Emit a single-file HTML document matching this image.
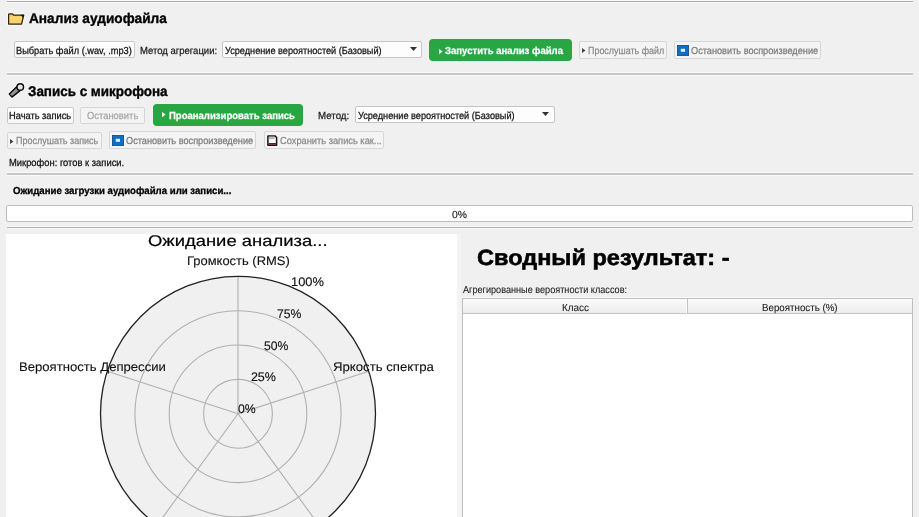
<!DOCTYPE html>
<html><head><meta charset="utf-8">
<style>
html,body{margin:0;padding:0;}
body{width:919px;height:517px;overflow:hidden;background:#f0f0f0;position:relative;font-family:"Liberation Sans",sans-serif;color:#000;}
.a{position:absolute;}
.t{position:absolute;white-space:nowrap;line-height:1;transform-origin:0 0;text-rendering:geometricPrecision;}
.sep{position:absolute;left:7px;width:906px;height:2px;background:#c6c6c6;box-shadow:0 1px 0 #fafafa,0 -1px 0 #fafafa;}
.btn{position:absolute;box-sizing:border-box;border:1px solid #c9c9c9;border-radius:2px;background:linear-gradient(#ffffff,#f7f7f7);}
.btn.dis{border-color:#d6d6d6;background:#f4f4f4;}
.green{position:absolute;box-sizing:border-box;background:#27a643;border-radius:4px;}
.combo{position:absolute;box-sizing:border-box;border:1px solid #c6c6c6;border-radius:2px;background:#fdfdfd;}
.ui{font-size:10px;}
.gray{color:#6e6e6e;}
.lgray{color:#9c9c9c;}
.wb{color:#fff;font-weight:bold;font-size:10px;}
.h{font-weight:bold;font-size:14px;}
</style></head><body><div id="wrap" style="position:absolute;left:0;top:0;width:919px;height:517px;overflow:hidden;background:#f0f0f0;filter:blur(0.3px)">

<!-- separators -->
<div class="a" style="left:7px;top:1px;width:906px;height:1px;background:#a9a9a9;box-shadow:0 1px 0 #fbfbfb,0 -1px 0 #fbfbfb;"></div>
<div class="sep" style="top:73px;"></div>
<div class="sep" style="top:173px;"></div>
<div class="a" style="left:7px;top:227px;width:906px;height:1px;background:#b0b0b0;box-shadow:0 1px 0 #f8f8f8,0 -1px 0 #f8f8f8;"></div>

<!-- Section 1 header -->
<svg class="a" style="left:5px;top:10px" width="22" height="18" viewBox="0 -0.4 22 18">
  <path d="M3.6 4.2 Q3.6 3.4 4.5 3.4 L7.5 3.4 L8.5 4.6 L18.8 4.6 L16.6 13.6 L3.6 13.6 Z" fill="none" stroke="#fff" stroke-width="3" stroke-linejoin="round"/>
  <defs><linearGradient id="fg" x1="0" y1="0" x2="0" y2="1"><stop offset="0" stop-color="#f3b84a"/><stop offset="0.35" stop-color="#fbd673"/><stop offset="1" stop-color="#f7cf6a"/></linearGradient></defs>
  <path d="M3.6 4.2 Q3.6 3.4 4.5 3.4 L7.5 3.4 L8.5 4.6 L18.8 4.6 L16.6 13.6 L3.6 13.6 Z" fill="url(#fg)" stroke="#2e2208" stroke-width="1.25" stroke-linejoin="round"/>
  <path d="M15.4 4.4 L19.2 4.4 L17.9 7.2 Z" fill="#111"/>
</svg>

<div class="btn" style="left:14px;top:41px;width:121px;height:17px;"></div>
<div class="combo" style="left:222px;top:41px;width:200px;height:17px;"></div>
<svg class="a" style="left:410px;top:47px" width="7" height="4"><path d="M0 0 L7 0 L3.5 4Z" fill="#333"/></svg>

<div class="green" style="left:429px;top:39px;width:143px;height:22px;"></div>
<svg class="a" style="left:438.5px;top:48.5px" width="4" height="6"><path d="M0 0 L3.6 2.6 L0 5.2Z" fill="#fff"/></svg>

<div class="btn dis" style="left:579px;top:41px;width:88px;height:18px;"></div>
<svg class="a" style="left:582px;top:48px" width="4" height="5"><path d="M0 0 L3.5 2.5 L0 5Z" fill="#444"/></svg>

<div class="btn dis" style="left:674px;top:41px;width:147px;height:18px;"></div>
<svg class="a" style="left:677px;top:45px" width="12" height="11" viewBox="0 0 12 11"><rect x="0.5" y="0.3" width="11" height="10.4" fill="#0d6ec4" stroke="#0b3f80" stroke-width="0.8"/><rect x="3.8" y="3.8" width="4.2" height="3" fill="#d9f3ff"/></svg>

<!-- Section 2 header -->
<svg class="a" style="left:5px;top:80px" width="22" height="20" viewBox="0 0 22 20">
  <g fill="none" stroke="#fff" stroke-width="3.2" stroke-linejoin="round">
   <circle cx="15.25" cy="7" r="3.4"/>
   <path d="M11.66 6.73 L15.12 10.61 L6.93 17.09 L4.27 14.11 Z"/>
  </g>
  <defs><linearGradient id="mg" x1="0" y1="0" x2="1" y2="1"><stop offset="0" stop-color="#333"/><stop offset="0.5" stop-color="#9a9a9a"/><stop offset="1" stop-color="#2a2a2a"/></linearGradient></defs>
  <path d="M11.66 6.73 L15.12 10.61 L6.93 17.09 L4.27 14.11 Z" fill="url(#mg)" stroke="#0c0c0c" stroke-width="1.4" stroke-linejoin="round"/>
  <circle cx="15.25" cy="7" r="3.3" fill="#e6e6e6" stroke="#0c0c0c" stroke-width="1.5"/>
</svg>

<div class="btn" style="left:7px;top:107px;width:67px;height:17px;"></div>
<div class="btn dis" style="left:80px;top:107px;width:65px;height:17px;"></div>

<div class="green" style="left:153px;top:104px;width:150px;height:22px;"></div>
<svg class="a" style="left:162.3px;top:112px" width="4" height="6"><path d="M0 0 L3.7 2.6 L0 5.2Z" fill="#fff"/></svg>

<div class="combo" style="left:355px;top:106px;width:200px;height:17px;"></div>
<svg class="a" style="left:542px;top:112px" width="7" height="4"><path d="M0 0 L7 0 L3.5 4Z" fill="#333"/></svg>

<div class="btn dis" style="left:7px;top:132px;width:95px;height:17px;"></div>
<svg class="a" style="left:10px;top:139px" width="4" height="5"><path d="M0 0 L3.5 2.5 L0 5Z" fill="#444"/></svg>

<div class="btn dis" style="left:109px;top:131px;width:147px;height:18px;"></div>
<svg class="a" style="left:112px;top:135px" width="12" height="11" viewBox="0 0 12 11"><rect x="0.5" y="0.3" width="11" height="10.4" fill="#0d6ec4" stroke="#0b3f80" stroke-width="0.8"/><rect x="3.8" y="3.8" width="4.2" height="3" fill="#d9f3ff"/></svg>

<div class="btn dis" style="left:264px;top:131px;width:120px;height:18px;"></div>
<svg class="a" style="left:266px;top:134px" width="13" height="13" viewBox="0 0 13 13"><path d="M1.9 1.9 L9 1.9 L10.6 3.5 L10.6 11.3 L1.9 11.3Z" fill="#fdfdfd" stroke="#1a1418" stroke-width="1.5" stroke-linejoin="round"/><rect x="3" y="2.6" width="5.6" height="2.6" fill="#b8b8b8"/><rect x="2.6" y="9" width="7.3" height="1.7" fill="#7b0d33"/></svg>


<!-- progress -->
<div class="a" style="left:6px;top:205px;width:907px;height:17px;box-sizing:border-box;border:1px solid #bdbdbd;border-radius:2px;background:#fff;"></div>

<!-- plot -->
<div class="a" style="left:6px;top:234px;width:452px;height:283px;background:#fff;"></div>
<svg class="a" style="left:0;top:0" width="919" height="517">
  <defs><clipPath id="pc"><rect x="6" y="234" width="452" height="283"/></clipPath></defs>
  <g clip-path="url(#pc)">
    <circle cx="238" cy="413.8" r="137.5" fill="#f0f0f0"/>
    <g stroke="#b0b0b0" stroke-width="1.1" fill="none">
      <circle cx="238" cy="413.8" r="34.4"/>
      <circle cx="238" cy="413.8" r="68.8"/>
      <circle cx="238" cy="413.8" r="103.1"/>
      <line x1="238" y1="413.8" x2="238" y2="276.3"/>
      <line x1="238" y1="413.8" x2="368.8" y2="371.3"/>
      <line x1="238" y1="413.8" x2="318.8" y2="525"/>
      <line x1="238" y1="413.8" x2="157.2" y2="525"/>
      <line x1="238" y1="413.8" x2="107.2" y2="371.3"/>
    </g>
    <circle cx="238" cy="413.8" r="137.5" fill="none" stroke="#222" stroke-width="1.3"/>
  </g>
</svg>

<!-- right panel -->
<div class="a" style="left:457px;top:234px;width:4px;height:283px;background:#f4f4f4;"></div>
<div class="a" style="left:462px;top:298px;width:451px;height:230px;box-sizing:border-box;border:1px solid #bfbfbf;background:#fff;box-shadow:0 -1px 0 #fafafa;"></div>
<div class="a" style="left:463px;top:299px;width:449px;height:15px;box-sizing:border-box;background:linear-gradient(#fbfbfb,#ededed);border-bottom:1px solid #c4c4c4;"></div>
<div class="a" style="left:687px;top:299px;width:1px;height:15px;background:#c2c2c2;box-shadow:-1px 0 0 #fafafa;"></div>
<div class="t" id="h1" style="left:28.82px;top:11.0px;font-size:14px;font-weight:bold;color:#000;transform:scaleX(0.9757);-webkit-text-stroke:0.35px #000">Анализ аудиофайла</div>
<div class="t" id="t_vybr" style="left:16.19px;top:46.6px;font-size:10.2px;font-weight:normal;color:#111;transform:scaleX(0.9071);-webkit-text-stroke:0.25px #111">Выбрать файл (.wav, .mp3)</div>
<div class="t" id="t_met1" style="left:140.47px;top:46.6px;font-size:10.2px;font-weight:normal;color:#222;transform:scaleX(0.9333);-webkit-text-stroke:0.25px #222">Метод агрегации:</div>
<div class="t" id="t_combo1" style="left:225.20px;top:46.6px;font-size:10.2px;font-weight:normal;color:#111;transform:scaleX(0.8983);-webkit-text-stroke:0.25px #111">Усреднение вероятностей (Базовый)</div>
<div class="t" id="t_run" style="left:445.46px;top:47.2px;font-size:10.2px;font-weight:bold;color:#fff;transform:scaleX(0.9384);-webkit-text-stroke:0.25px #fff">Запустить анализ файла</div>
<div class="t" id="t_listen1" style="left:588.12px;top:46.6px;font-size:10.2px;font-weight:normal;color:#8a8a8a;transform:scaleX(0.8765);-webkit-text-stroke:0.25px #8a8a8a">Прослушать файл</div>
<div class="t" id="t_stop1" style="left:691.30px;top:46.6px;font-size:10.2px;font-weight:normal;color:#7c7c7c;transform:scaleX(0.9014);-webkit-text-stroke:0.25px #7c7c7c">Остановить воспроизведение</div>
<div class="t" id="h2" style="left:28.44px;top:83.5px;font-size:14px;font-weight:bold;color:#000;transform:scaleX(0.9586);-webkit-text-stroke:0.35px #000">Запись с микрофона</div>
<div class="t" id="t_start" style="left:8.69px;top:111.8px;font-size:10.2px;font-weight:normal;color:#111;transform:scaleX(0.9090);-webkit-text-stroke:0.25px #111">Начать запись</div>
<div class="t" id="t_stopr" style="left:87.48px;top:111.8px;font-size:10.2px;font-weight:normal;color:#a6a6a6;transform:scaleX(0.9222);-webkit-text-stroke:0.25px #a6a6a6">Остановить</div>
<div class="t" id="t_analyze" style="left:169.46px;top:111.8px;font-size:10.2px;font-weight:bold;color:#fff;transform:scaleX(0.9361);-webkit-text-stroke:0.25px #fff">Проанализировать запись</div>
<div class="t" id="t_met2" style="left:318.15px;top:111.8px;font-size:10.2px;font-weight:normal;color:#222;transform:scaleX(0.9548);-webkit-text-stroke:0.25px #222">Метод:</div>
<div class="t" id="t_combo2" style="left:358.20px;top:111.8px;font-size:10.2px;font-weight:normal;color:#111;transform:scaleX(0.8983);-webkit-text-stroke:0.25px #111">Усреднение вероятностей (Базовый)</div>
<div class="t" id="t_listen2" style="left:16.32px;top:136.9px;font-size:10.2px;font-weight:normal;color:#8a8a8a;transform:scaleX(0.8826);-webkit-text-stroke:0.25px #8a8a8a">Прослушать запись</div>
<div class="t" id="t_stop2" style="left:126.30px;top:136.9px;font-size:10.2px;font-weight:normal;color:#7c7c7c;transform:scaleX(0.9014);-webkit-text-stroke:0.25px #7c7c7c">Остановить воспроизведение</div>
<div class="t" id="t_save" style="left:280.29px;top:136.9px;font-size:10.2px;font-weight:normal;color:#8a8a8a;transform:scaleX(0.9109);-webkit-text-stroke:0.25px #8a8a8a">Сохранить запись как...</div>
<div class="t" id="t_mic" style="left:9.28px;top:159px;font-size:10.2px;font-weight:normal;color:#111;transform:scaleX(0.9203);-webkit-text-stroke:0.25px #111">Микрофон: готов к записи.</div>
<div class="t" id="t_wait" style="left:13.30px;top:187.4px;font-size:10.2px;font-weight:bold;color:#000;transform:scaleX(0.9442);-webkit-text-stroke:0.3px #000">Ожидание загрузки аудиофайла или записи...</div>
<div class="t" id="t_pct" style="left:452.40px;top:210.7px;font-size:10.2px;font-weight:normal;color:#222;transform:scaleX(1.0214);-webkit-text-stroke:0.15px #222">0%</div>
<div class="t" id="t_title" style="left:147.91px;top:234.3px;font-size:15.5px;font-weight:normal;color:#000;transform:scaleX(1.1886);-webkit-text-stroke:0.2px #000">Ожидание анализа...</div>
<div class="t" id="t_rms" style="left:186.86px;top:255.4px;font-size:12.5px;font-weight:normal;color:#111;transform:scaleX(1.0361);-webkit-text-stroke:0.12px #111">Громкость (RMS)</div>
<div class="t" id="t_dep" style="left:18.55px;top:361.3px;font-size:12.5px;font-weight:normal;color:#111;transform:scaleX(1.0486);-webkit-text-stroke:0.12px #111">Вероятность Депрессии</div>
<div class="t" id="t_br" style="left:332.95px;top:361.3px;font-size:12.5px;font-weight:normal;color:#111;transform:scaleX(1.0537);-webkit-text-stroke:0.12px #111">Яркость спектра</div>
<div class="t" id="t_100" style="left:290.97px;top:276px;font-size:12.5px;font-weight:normal;color:#111;transform:scaleX(1.0300);-webkit-text-stroke:0.12px #111">100%</div>
<div class="t" id="t_75" style="left:277.12px;top:308.3px;font-size:12.5px;font-weight:normal;color:#111;transform:scaleX(0.9750);-webkit-text-stroke:0.12px #111">75%</div>
<div class="t" id="t_50" style="left:263.82px;top:340px;font-size:12.5px;font-weight:normal;color:#111;transform:scaleX(0.9750);-webkit-text-stroke:0.12px #111">50%</div>
<div class="t" id="t_25" style="left:250.90px;top:371px;font-size:12.5px;font-weight:normal;color:#111;transform:scaleX(1.0000);-webkit-text-stroke:0.12px #111">25%</div>
<div class="t" id="t_0" style="left:238.12px;top:403.2px;font-size:12.5px;font-weight:normal;color:#111;transform:scaleX(0.9824);-webkit-text-stroke:0.12px #111">0%</div>
<div class="t" id="t_sum" style="left:476.63px;top:247px;font-size:22px;font-weight:bold;color:#000;transform:scaleX(1.0697);-webkit-text-stroke:0.55px #000">Сводный результат: -</div>
<div class="t" id="t_agg" style="left:462.90px;top:285.8px;font-size:10.2px;font-weight:normal;color:#222;transform:scaleX(0.8962);-webkit-text-stroke:0.1px #222">Агрегированные вероятности классов:</div>
<div class="t" id="t_cls" style="left:561.63px;top:304.2px;font-size:10.2px;font-weight:normal;color:#222;transform:scaleX(0.9731);-webkit-text-stroke:0.1px #222">Класс</div>
<div class="t" id="t_prob" style="left:762.44px;top:304.2px;font-size:10.2px;font-weight:normal;color:#222;transform:scaleX(0.9571);-webkit-text-stroke:0.1px #222">Вероятность (%)</div>
</div></body></html>
